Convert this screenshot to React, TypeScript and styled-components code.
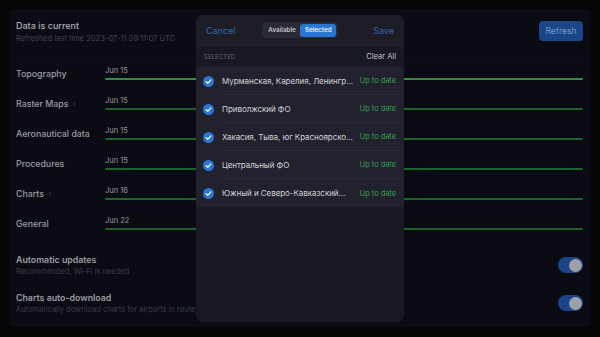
import React from 'react';
import styled, { createGlobalStyle } from 'styled-components';

const Global = createGlobalStyle`
	html, body {
		margin: 0;
		padding: 0;
		background: #050508;
		font-family: Inter, "Noto Sans", sans-serif;
	}
	#root {
		width: 600px;
		height: 337px;
		overflow: hidden;
	}
`;

const Screen = styled.div`
	position: relative;
	width: 600px;
	height: 337px;
	padding: 9px;
	box-sizing: border-box;
`;

const Panel = styled.div`
	height: 318px;
	background: #0b0b13;
	border-radius: 4px;
	padding: 0 8px 0 7px;
	box-sizing: border-box;
	display: flex;
	flex-direction: column;
`;

const Header = styled.div`
	height: 49px;
	display: flex;
	align-items: flex-start;
	justify-content: space-between;
	padding-top: 11px;
	box-sizing: border-box;
	border-bottom: 1px solid #101018;
`;

const Title = styled.div`
	font-size: 9px;
	font-weight: 500;
	color: #aeaeb3;
	line-height: 12px;
`;

const Sub = styled.div`
	font-size: 7.5px;
	color: #43444b;
	line-height: 11px;
	margin-top: 1px;
`;

const RefreshBtn = styled.div`
	width: 44px;
	height: 20px;
	margin-top: 1px;
	border-radius: 4px;
	background: #1a4688;
	color: #7896c8;
	font-size: 8.5px;
	display: flex;
	align-items: center;
	justify-content: center;
`;

const Row = styled.div`
	height: 30px;
	display: flex;
	align-items: center;
`;

const Label = styled.div`
	width: 89px;
	font-size: 8.8px;
	font-weight: 500;
	color: #9c9ca1;
	display: flex;
	align-items: center;
	gap: 4px;
`;

const Chevron = styled.span`
	color: #36363e;
	font-size: 9px;
`;

const Track = styled.div`
	flex: 1;
	display: flex;
	flex-direction: column;
	gap: 3px;
	margin-top: -1px;
`;

const DateText = styled.div`
	font-size: 7.5px;
	color: #97979c;
	line-height: 9px;
`;

const Bar = styled.div<{ $bright?: boolean }>`
	height: 2px;
	border-radius: 1px;
	background: ${p => (p.$bright ? '#388a42' : '#1d632b')};
`;

const Setting = styled.div`
	height: 38px;
	display: flex;
	align-items: center;
	justify-content: space-between;
`;

const SettingTitle = styled.div`
	font-size: 8.8px;
	font-weight: 600;
	color: #9c9ca1;
	line-height: 12px;
`;

const SettingSub = styled.div`
	font-size: 7.5px;
	color: #3b3c43;
	line-height: 11px;
`;

const Toggle = styled.div`
	width: 25px;
	height: 16px;
	border-radius: 8px;
	background: #1b4588;
	display: flex;
	align-items: center;
	justify-content: flex-end;
	padding: 1.5px;
	box-sizing: border-box;
`;

const Knob = styled.div`
	width: 13px;
	height: 13px;
	border-radius: 50%;
	background: #9fa0a5;
`;

const Modal = styled.div`
	position: absolute;
	left: 196px;
	top: 15px;
	width: 208px;
	height: 307px;
	background: #181922;
	border-radius: 7px;
	overflow: hidden;
	display: flex;
	flex-direction: column;
`;

const ModalHead = styled.div`
	height: 30px;
	background: #1c1d27;
	display: flex;
	align-items: center;
	justify-content: space-between;
	padding: 0 10px;
	box-sizing: border-box;
`;

const HeadLink = styled.div`
	font-size: 9px;
	color: #3768ad;
	width: 34px;
	&:last-child {
		text-align: right;
	}
`;

const Segmented = styled.div`
	display: flex;
	background: #292a33;
	border-radius: 4px;
	padding: 1.5px;
	height: 16px;
	box-sizing: border-box;
`;

const Segment = styled.div<{ $active?: boolean }>`
	font-size: 6.4px;
	font-weight: 500;
	color: ${p => (p.$active ? '#ffffff' : '#d4d4d8')};
	background: ${p => (p.$active ? '#2a76d4' : 'transparent')};
	border-radius: 3px;
	padding: 0 4.5px;
	display: flex;
	align-items: center;
`;

const SectionHead = styled.div`
	height: 22px;
	display: flex;
	align-items: center;
	justify-content: space-between;
	padding: 0 8px;
	border-top: 1px solid #21222c;
	box-sizing: border-box;
`;

const SectionLabel = styled.div`
	font-size: 5.8px;
	color: #66676f;
	letter-spacing: 0.2px;
`;

const ClearAll = styled.div`
	font-size: 7.5px;
	color: #c4c4c8;
`;

const List = styled.div`
	background: #21222d;
	display: flex;
	flex-direction: column;
`;

const Item = styled.div`
	height: 28px;
	display: flex;
	align-items: center;
	padding-left: 7px;
	svg {
		flex-shrink: 0;
	}
`;

const ItemBody = styled.div<{ $last?: boolean }>`
	flex: 1;
	min-width: 0;
	height: 100%;
	display: flex;
	align-items: center;
	justify-content: space-between;
	gap: 4px;
	padding-right: 8px;
	margin-left: 8px;
	border-bottom: ${p => (p.$last ? 'none' : '1px solid #2a2b36')};
	box-sizing: border-box;
`;

const ItemName = styled.div`
	font-size: 8px;
	letter-spacing: -0.05px;
	color: #d2d2d6;
	white-space: nowrap;
	min-width: 0;
`;

const Status = styled.div`
	font-size: 7.4px;
	color: #35a053;
	white-space: nowrap;
	flex-shrink: 0;
`;

function Check() {
	return (
		<svg width="11" height="11" viewBox="0 0 22 22">
			<circle cx="11" cy="11" r="11" fill="#2a76d4" />
			<path d="M6.2 11.4 L9.6 14.6 L15.8 7.8" stroke="#ffffff" strokeWidth="2.4" fill="none" strokeLinecap="round" strokeLinejoin="round" />
		</svg>
	);
}

const rows = [
	{ name: 'Topography', date: 'Jun 15', chevron: false },
	{ name: 'Raster Maps', date: 'Jun 15', chevron: true },
	{ name: 'Aeronautical data', date: 'Jun 15', chevron: false },
	{ name: 'Procedures', date: 'Jun 15', chevron: false },
	{ name: 'Charts', date: 'Jun 16', chevron: true },
	{ name: 'General', date: 'Jun 22', chevron: false },
];

const regions = [
	'Мурманская, Карелия, Ленингр...',
	'Приволжский ФО',
	'Хакасия, Тыва, юг Красноярско...',
	'Центральный ФО',
	'Южный и Северо-Кавказский...',
];

export default function App() {
	return (
		<Screen>
			<Global />
			<Panel>
				<Header>
					<div>
						<Title>Data is current</Title>
						<Sub>Refreshed last time 2023-07-11 09:11:07 UTC</Sub>
					</div>
					<RefreshBtn>Refresh</RefreshBtn>
				</Header>
				{rows.map((r, i) => (
					<Row key={r.name}>
						<Label>
							{r.name}
							{r.chevron && <Chevron>›</Chevron>}
						</Label>
						<Track>
							<DateText>{r.date}</DateText>
							<Bar $bright={i === 0} />
						</Track>
					</Row>
				))}
				<div style={{ height: 8 }} />
				<Setting>
					<div>
						<SettingTitle>Automatic updates</SettingTitle>
						<SettingSub>Recommended, Wi-Fi is needed</SettingSub>
					</div>
					<Toggle><Knob /></Toggle>
				</Setting>
				<Setting>
					<div>
						<SettingTitle>Charts auto-download</SettingTitle>
						<SettingSub>Automatically download charts for airports in route</SettingSub>
					</div>
					<Toggle><Knob /></Toggle>
				</Setting>
			</Panel>

			<Modal>
				<ModalHead>
					<HeadLink>Cancel</HeadLink>
					<Segmented>
						<Segment>Available</Segment>
						<Segment $active>Selected</Segment>
					</Segmented>
					<HeadLink>Save</HeadLink>
				</ModalHead>
				<SectionHead>
					<SectionLabel>SELECTED</SectionLabel>
					<ClearAll>Clear All</ClearAll>
				</SectionHead>
				<List>
					{regions.map((name, i) => (
						<Item key={name}>
							<Check />
							<ItemBody $last={i === regions.length - 1}>
								<ItemName>{name}</ItemName>
								<Status>Up to date</Status>
							</ItemBody>
						</Item>
					))}
				</List>
			</Modal>
		</Screen>
	);
}
